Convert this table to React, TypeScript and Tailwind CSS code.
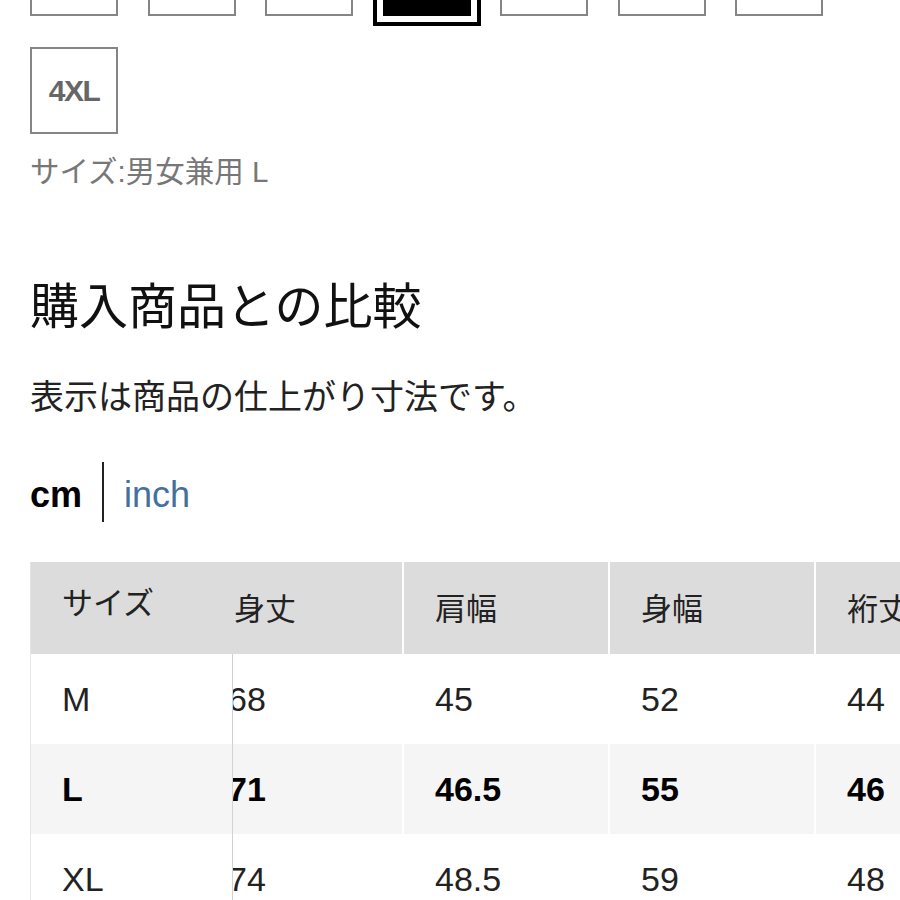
import React from 'react';

const latin = "font-['Liberation_Sans','Noto_Sans_CJK_JP',sans-serif]";

const columns = ['身丈', '肩幅', '身幅', '裄丈'];

const rows = [
  { size: 'M', values: ['68', '45', '52', '44'], bold: false },
  { size: 'L', values: ['71', '46.5', '55', '46'], bold: true },
  { size: 'XL', values: ['74', '48.5', '59', '48'], bold: false },
];

// seven size buttons of the row above, only their bottom edges are in view
function SizeBox({ selected }: { selected?: boolean }) {
  return (
    <div
      className={
        selected
          ? 'w-[88px] h-[88px] shrink-0 bg-black border-2 border-black outline-4 outline-black outline-offset-[6px]'
          : 'w-[88px] h-[88px] shrink-0 bg-white border-2 border-[#858585]'
      }
    />
  );
}

export default function App() {
  return (
    <div className={`w-[900px] h-[900px] overflow-hidden bg-white pl-[30px] ${latin}`}>
      <div className="flex gap-[29.5px] mt-[-72px]">
        {[0, 1, 2, 3, 4, 5, 6].map((i) => (
          <SizeBox key={i} selected={i === 3} />
        ))}
      </div>

      <div className="mt-[31px] w-[88px] h-[87px] border-2 border-[#858585] flex items-center justify-center">
        <span className="text-[30px] font-bold text-[#666] tracking-[-1.5px] leading-none">4XL</span>
      </div>

      <p className="mt-[20px] text-[29.5px] leading-[36px] text-[#777]">サイズ:男女兼用 L</p>

      <h2 className="mt-[83px] text-[49px] leading-[60px] text-[#111] font-['Noto_Sans_CJK_JP',sans-serif] font-normal">
        購入商品との比較
      </h2>

      <p className="mt-[40px] text-[34px] leading-[44px] text-[#222] font-['Noto_Sans_CJK_JP',sans-serif]">
        表示は商品の仕上がり寸法です。
      </p>

      <div className="mt-[45px] flex items-center h-[60px]">
        <span className="text-[36px] leading-none font-bold text-black mt-[5px]">cm</span>
        <span className="w-[2px] h-[60px] bg-[#222] ml-[20px] mr-[20px]" />
        <span className="text-[36px] leading-none text-[#44709e] mt-[5px]">inch</span>
      </div>

      {/* size table, first column pinned, rest scrolled */}
      <div className="mt-[40px] overflow-hidden border-l border-[#e6e6e6]">
        <div className="flex h-[92px] bg-[#dcdcdc] text-[31px] text-[#222]">
          <div className="w-[202px] shrink-0 pl-[31px] pb-[7px] flex items-center">サイズ</div>
          <div className="w-[169px] shrink-0 pl-[1px] pt-[5px] flex items-center">{columns[0]}</div>
          {columns.slice(1).map((c) => (
            <div key={c} className="w-[206px] shrink-0 border-l-2 border-white pl-[31px] pt-[5px] flex items-center">
              {c}
            </div>
          ))}
        </div>

        {rows.map((r) => (
          <div
            key={r.size}
            className={`flex h-[90px] text-[34px] leading-none ${r.bold ? 'bg-[#f5f5f5] font-bold text-black' : 'bg-white text-[#222]'}`}
          >
            <div className="w-[202px] shrink-0 pl-[31px] border-r border-[#d2d2d2] flex items-center">{r.size}</div>
            <div className="w-[169px] shrink-0 overflow-hidden flex items-center">
              <span className="ml-[-5px]">{r.values[0]}</span>
            </div>
            {r.values.slice(1).map((v, j) => (
              <div key={j} className="w-[206px] shrink-0 border-l-2 border-white pl-[31px] flex items-center">
                {v}
              </div>
            ))}
          </div>
        ))}
      </div>
    </div>
  );
}
